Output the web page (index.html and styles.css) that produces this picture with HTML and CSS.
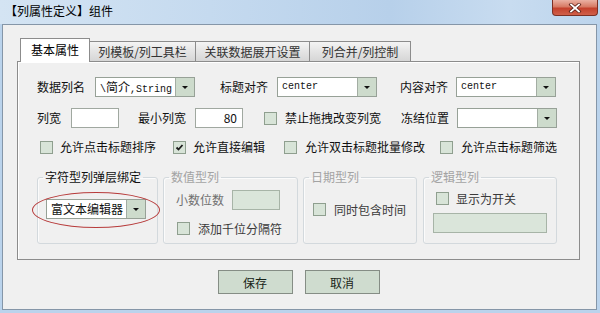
FILE: index.html
```html
<!DOCTYPE html>
<html lang="zh-CN">
<head>
    <meta charset="UTF-8">
    <title>列属性定义</title>
    <link rel="stylesheet" href="styles.css">
</head>
<body>
<div class="window">
    <div class="titlebar">
        <span class="title">【列属性定义】组件</span>
        <div class="close-btn">
            <svg width="14" height="10" viewBox="0 0 14 10">
                <path d="M3 1.5 L11 8.5 M11 1.5 L3 8.5" stroke="#5a2018" stroke-width="3.4" stroke-linecap="square"/>
                <path d="M3 1.5 L11 8.5 M11 1.5 L3 8.5" stroke="#ffffff" stroke-width="1.8" stroke-linecap="square"/>
            </svg>
        </div>
    </div>

    <div class="client">
        <div class="tabs">
            <div class="tab active">基本属性</div>
            <div class="tab t2">列模板/列工具栏</div>
            <div class="tab t3">关联数据展开设置</div>
            <div class="tab t4">列合并/列控制</div>
        </div>

        <div class="panel">
            <div class="row">
                <span class="lbl w58">数据列名</span>
                <div class="combo">
                    <span class="combo-text mono">\<span class="cjk">简介</span>,String</span>
                    <span class="combo-btn"><i class="arrow"></i></span>
                </div>
                <span class="lbl w57 ml25">标题对齐</span>
                <div class="combo">
                    <span class="combo-text mono">center</span>
                    <span class="combo-btn"><i class="arrow"></i></span>
                </div>
                <span class="lbl w56 ml23">内容对齐</span>
                <div class="combo">
                    <span class="combo-text mono">center</span>
                    <span class="combo-btn"><i class="arrow"></i></span>
                </div>
            </div>

            <div class="row row2">
                <span class="lbl w34">列宽</span>
                <div class="input"></div>
                <span class="lbl w57 ml19">最小列宽</span>
                <div class="input num">80</div>
                <span class="check ml21"></span>
                <span class="lbl ml8">禁止拖拽改变列宽</span>
                <span class="lbl w56 ml20">冻结位置</span>
                <div class="combo">
                    <span class="combo-text"></span>
                    <span class="combo-btn"><i class="arrow"></i></span>
                </div>
            </div>

            <div class="row row3">
                <span class="check ml3"></span>
                <span class="lbl ml7">允许点击标题排序</span>
                <span class="check checked ml17">
                    <svg width="11" height="11" viewBox="0 0 11 11"><path d="M2.5 5.5 L4.5 7.5 L8.5 3" fill="none" stroke="#1c1c1c" stroke-width="1.8"/></svg>
                </span>
                <span class="lbl ml7">允许直接编辑</span>
                <span class="check ml19"></span>
                <span class="lbl ml8">允许双击标题批量修改</span>
                <span class="check ml15"></span>
                <span class="lbl ml8">允许点击标题筛选</span>
            </div>

            <div class="groups">
                <fieldset class="group g1">
                    <legend>字符型列弹层绑定</legend>
                    <div class="combo combo-rich">
                        <span class="combo-text">富文本编辑器</span>
                        <span class="combo-btn"><i class="arrow"></i></span>
                    </div>
                    <div class="mark"></div>
                </fieldset>
                <fieldset class="group g2 off">
                    <legend>数值型列</legend>
                    <div class="row grow">
                        <span class="lbl dim w56">小数位数</span>
                        <div class="input green"></div>
                    </div>
                    <div class="row crow">
                        <span class="check"></span>
                        <span class="lbl sub ml8">添加千位分隔符</span>
                    </div>
                </fieldset>
                <fieldset class="group g3 off">
                    <legend>日期型列</legend>
                    <div class="row crow">
                        <span class="check"></span>
                        <span class="lbl sub ml8">同时包含时间</span>
                    </div>
                </fieldset>
                <fieldset class="group g4 off">
                    <legend>逻辑型列</legend>
                    <div class="row crow">
                        <span class="check"></span>
                        <span class="lbl sub ml7">显示为开关</span>
                    </div>
                    <div class="input green wide"></div>
                </fieldset>
            </div>
        </div>

        <div class="buttons">
            <button type="button" class="btn">保存</button>
            <button type="button" class="btn">取消</button>
        </div>
    </div>
</div>
</body>
</html>
```

FILE: styles.css
```css
body {
    margin: 0;
    font-family: "Noto Sans CJK SC", "Liberation Sans", sans-serif;
    font-size: 12px;
    color: #111;
}
.window {
    width: 600px;
    height: 313px;
    background: #bad3ec;
    display: flex;
    flex-direction: column;
    overflow: hidden;
}
.titlebar {
    height: 24px;
    flex: none;
    display: flex;
    justify-content: space-between;
    align-items: flex-start;
    background: linear-gradient(to right, #d4e4f3, #c5daef 35%, #b7d0ea 65%, #c8dcf0 85%, #bcd4ec);
}
.title {
    padding: 2px 0 0 5px;
    line-height: 18px;
    font-size: 12px;
    color: #000;
}
.close-btn {
    width: 44px;
    height: 15px;
    margin-right: 2px;
    border: 1px solid #7c3024;
    border-top: none;
    border-radius: 0 0 4px 4px;
    background: linear-gradient(#eab1a3, #d77a64 45%, #c4412c 55%, #d0604a);
    display: flex;
    align-items: center;
    justify-content: center;
}
.client {
    flex: 1;
    margin: 0 3px 3px 2px;
    border: 1px solid #8596a8;
    background: #f0f0f0;
    padding: 13px 16px 0 14px;
}

/* tabs */
.tabs {
    display: flex;
    align-items: flex-end;
    height: 24px;
    margin: 0 0 -1px 3px;
}
.tab {
    height: 20px;
    margin-bottom: 1px;
    border: 1px solid #8c8c8c;
    border-bottom: none;
    border-left: none;
    box-sizing: border-box;
    background: linear-gradient(#f4f4f4, #e4e4e4 50%, #d6d6d6);
    color: #333;
    text-align: center;
    line-height: 20px;
}
.tab.active {
    position: relative;
    z-index: 1;
    width: 70px;
    height: 24px;
    margin-bottom: 0;
    border-left: 1px solid #8c8c8c;
    background: #fff;
    color: #000;
    line-height: 21px;
}
.t2 { width: 106px; }
.t3 { width: 114px; }
.t4 { width: 101px; }

.panel {
    height: 199px;
    box-sizing: border-box;
    border: 1px solid #8c8c8c;
    box-shadow: inset 1px 1px 0 #fff;
    padding: 15px 0 0 19px;
}
.row {
    display: flex;
    align-items: center;
    height: 20px;
}
.row2 { margin-top: 11px; }
.row3 { margin-top: 11px; height: 16px; }
.lbl {
    flex: none;
    line-height: 16px;
    white-space: nowrap;
}
.w34 { width: 34px; }
.w56 { width: 56px; }
.w57 { width: 57px; }
.w58 { width: 58px; }
.ml3 { margin-left: 3px; }
.ml7 { margin-left: 7px; }
.ml8 { margin-left: 8px; }
.ml15 { margin-left: 15px; }
.ml17 { margin-left: 17px; }
.ml19 { margin-left: 19px; }
.ml20 { margin-left: 20px; }
.ml21 { margin-left: 21px; }
.ml23 { margin-left: 23px; }
.ml25 { margin-left: 25px; }

.combo {
    flex: none;
    display: flex;
    width: 100px;
    height: 20px;
    box-sizing: border-box;
    border: 1px solid #97a197;
    background: #fff;
}
.combo-text {
    flex: 1;
    padding-left: 3px;
    line-height: 18px;
    overflow: hidden;
    white-space: nowrap;
}
.mono {
    font-family: "Liberation Mono", "Noto Sans CJK SC", monospace;
    font-size: 10px;
    padding-left: 4px;
}
.mono .cjk {
    font-family: "Noto Sans CJK SC", sans-serif;
    font-size: 12px;
}
.combo-btn {
    width: 18px;
    border-left: 1px solid #a3ada3;
    background: #cddbcc;
    display: flex;
    align-items: center;
    justify-content: center;
}
.arrow {
    width: 0;
    height: 0;
    border-left: 3px solid transparent;
    border-right: 3px solid transparent;
    border-top: 3px solid #111;
}
.input {
    flex: none;
    width: 48px;
    height: 20px;
    box-sizing: border-box;
    border: 1px solid #a0a8a0;
    background: #fff;
}
.input.num {
    text-align: right;
    padding-right: 5px;
    line-height: 18px;
}
.input.green {
    background: #dae5da;
    border-color: #a7b4a7;
}
.check {
    flex: none;
    width: 13px;
    height: 13px;
    box-sizing: border-box;
    border: 1px solid #8f9f8f;
    background: #d8e4d8;
    display: flex;
    align-items: center;
    justify-content: center;
}

/* group boxes */
.groups {
    display: flex;
    margin-top: 13px;
}
.group {
    flex: none;
    margin: 0;
    padding: 0;
    height: 76px;
    box-sizing: border-box;
    border: 1px solid #d3d9dd;
    border-radius: 3px;
    box-shadow: inset 1px 1px 0 #fbfbfb;
}
.group legend {
    margin-left: 5px;
    padding: 0 2px;
    line-height: 18px;
}
.group.off legend { color: #a3a3a3; }
.g1 { width: 121px; position: relative; }
.g2 { width: 135px; margin-left: 5px; }
.g3 { width: 114px; margin-left: 5px; }
.g4 { width: 134px; margin-left: 6px; }

.combo-rich {
    margin: 13px 0 0 8px;
}
.combo-rich .combo-text { padding-left: 4px; }
.mark {
    position: absolute;
    left: -6px;
    top: 6px;
    width: 128px;
    height: 36px;
    box-sizing: border-box;
    border: 1.3px solid #b73b3b;
    border-radius: 50%;
}
.g2 .grow { margin: 4px 0 0 12px; }
.g2 .crow { margin: 12px 0 0 13px; height: 13px; }
.g3 .crow { margin: 17px 0 0 9px; height: 13px; }
.g4 .crow { margin: 6px 0 0 12px; height: 13px; }
.dim { color: #6f6f6f; }
.sub { color: #3a3a3a; }
.input.wide {
    width: 114px;
    margin: 8px 0 0 9px;
}

.buttons {
    display: flex;
    justify-content: center;
    gap: 12px;
    margin-top: 10px;
}
.btn {
    width: 75px;
    height: 24px;
    padding: 0;
    border: 1px solid #858d85;
    background: #cfdccf;
    font-family: "Noto Sans CJK SC", sans-serif;
    font-size: 12px;
    color: #182418;
}
```
